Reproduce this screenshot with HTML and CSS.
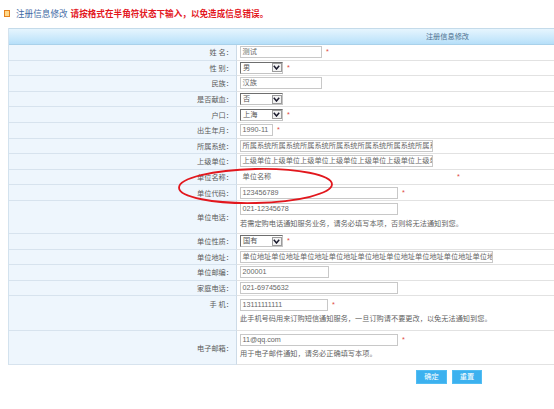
FILE: index.html
```html
<!DOCTYPE html>
<html lang="zh-CN">
<head>
<meta charset="utf-8">
<title>注册信息修改</title>
<link rel="stylesheet" href="styles.css">
</head>
<body>
<div class="page">
  <div class="title">
    <span class="ico"></span>
    <span class="t-blue">注册信息修改</span>
    <span class="t-red">请按格式在半角符状态下输入，以免造成信息错误。</span>
  </div>

  <div class="form">
    <div class="head">注册信息修改</div>

    <div class="row"><div class="lab">姓 名：</div><div class="val"><span class="inp w82">测试</span><span class="req">*</span></div></div>
    <div class="row"><div class="lab">性 别：</div><div class="val"><span class="sel"><span class="sel-t">男</span><span class="arrow"><svg width="7" height="5" viewBox="0 0 7 5"><path d="M0.8 0.8 L3.5 4 L6.2 0.8" fill="none" stroke="#1b1b2e" stroke-width="1.5"/></svg></span></span><span class="req">*</span></div></div>
    <div class="row"><div class="lab">民族：</div><div class="val"><span class="inp w82">汉族</span></div></div>
    <div class="row"><div class="lab">是否献血：</div><div class="val"><span class="sel"><span class="sel-t">否</span><span class="arrow"><svg width="7" height="5" viewBox="0 0 7 5"><path d="M0.8 0.8 L3.5 4 L6.2 0.8" fill="none" stroke="#1b1b2e" stroke-width="1.5"/></svg></span></span></div></div>
    <div class="row"><div class="lab">户口：</div><div class="val"><span class="sel"><span class="sel-t">上海</span><span class="arrow"><svg width="7" height="5" viewBox="0 0 7 5"><path d="M0.8 0.8 L3.5 4 L6.2 0.8" fill="none" stroke="#1b1b2e" stroke-width="1.5"/></svg></span></span><span class="req">*</span></div></div>
    <div class="row"><div class="lab">出生年月：</div><div class="val"><span class="inp w33">1990-11</span><span class="req">*</span></div></div>
    <div class="row"><div class="lab">所属系统：</div><div class="val"><span class="inp w193">所属系统所属系统所属系统所属系统所属系统所属系统所属系统所属系统</span></div></div>
    <div class="row"><div class="lab">上级单位：</div><div class="val"><span class="inp w193">上级单位上级单位上级单位上级单位上级单位上级单位上级单位上级单位</span></div></div>
    <div class="row"><div class="lab">单位名称：</div><div class="val"><span class="inp w213 plain">单位名称</span><span class="req">*</span></div></div>
    <div class="row"><div class="lab">单位代码：</div><div class="val"><span class="inp w158">123456789</span><span class="req">*</span></div></div>

    <div class="row tall r-tel"><div class="lab">单位电话：</div><div class="val col"><span class="inp w158">021-12345678</span><span class="note">若需定购电话通知服务业务，请务必填写本项，否则将无法通知到您。</span></div></div>

    <div class="row"><div class="lab">单位性质：</div><div class="val"><span class="sel"><span class="sel-t">国有</span><span class="arrow"><svg width="7" height="5" viewBox="0 0 7 5"><path d="M0.8 0.8 L3.5 4 L6.2 0.8" fill="none" stroke="#1b1b2e" stroke-width="1.5"/></svg></span></span><span class="req">*</span></div></div>
    <div class="row"><div class="lab">单位地址：</div><div class="val"><span class="inp w253">单位地址单位地址单位地址单位地址单位地址单位地址单位地址单位地址单位地址单位地址</span></div></div>
    <div class="row"><div class="lab">单位邮编：</div><div class="val"><span class="inp w89">200001</span></div></div>
    <div class="row"><div class="lab">家庭电话：</div><div class="val"><span class="inp w158">021-69745632</span></div></div>

    <div class="row tall r-mob"><div class="lab top">手 机：</div><div class="val col"><span class="line"><span class="inp w88">13111111111</span><span class="req">*</span></span><span class="note">此手机号码用来订购短信通知服务，一旦订购请不要更改，以免无法通知到您。</span></div></div>
    <div class="row tall r-mail"><div class="lab">电子邮箱：</div><div class="val col"><span class="line"><span class="inp w158">11@qq.com</span><span class="req">*</span></span><span class="note">用于电子邮件通知，请务必正确填写本项。</span></div></div>
  </div>

  <div class="btns">
    <span class="btn">确定</span>
    <span class="btn">重置</span>
  </div>

  <svg class="mark" width="554" height="409" viewBox="0 0 554 409">
    <ellipse cx="255.5" cy="186" rx="76.5" ry="17" transform="rotate(-1.3 255.5 186)" fill="none" stroke="#e2171d" stroke-width="1.8"/>
  </svg>
</div>
</body>
</html>
```

FILE: styles.css
```css
* {
  box-sizing: border-box;
}

html,
body {
  margin: 0;
  padding: 0;
  background: #ffffff;
}

body {
  width: 554px;
  height: 409px;
  overflow: hidden;
  font-family: "Liberation Sans", "Noto Sans CJK SC", sans-serif;
  font-size: 7.2px;
  color: #555555;
}

.page {
  position: relative;
  width: 554px;
  height: 409px;
}

/* title line */
.title {
  height: 28px;
  display: flex;
  align-items: center;
  padding-left: 4px;
  padding-bottom: 1.5px;
  font-size: 8.6px;
  white-space: nowrap;
}

.ico {
  width: 6px;
  height: 7.5px;
  border: 1.2px solid #e5811c;
  background: #ffd88a;
  margin-right: 6px;
  flex: none;
}

.t-blue {
  color: #3f6aa4;
}

.t-red {
  color: #e3161d;
  font-weight: bold;
  margin-left: 3px;
}

/* form table */
.form {
  margin-left: 8px;
  width: 546px;
  border-left: 1px solid #d3e2ee;
}

.head {
  height: 17px;
  border-top: 1px solid #c4dbea;
  border-bottom: 1px solid #a9d1ea;
  background: linear-gradient(#e6f5fe, #c6e7fb 70%, #b6dff9);
  color: #4d6f8e;
  text-align: center;
  padding-left: 332px;
  line-height: 15px;
}

.row {
  display: grid;
  grid-template-columns: 228px 1fr;
  height: 15.6px;
}

.lab {
  background: #eef6fd;
  border-right: 1px solid #cddbe7;
  border-bottom: 1px solid #d7e3ee;
  display: flex;
  align-items: center;
  justify-content: flex-end;
  padding-right: 3px;
  white-space: nowrap;
  color: #5a5a5a;
}

.lab.top {
  align-items: flex-start;
  padding-top: 2.6px;
  line-height: 12px;
}

.val {
  border-bottom: 1px solid #e2e2e2;
  display: flex;
  align-items: center;
  padding-left: 3px;
  white-space: nowrap;
}

.val.col {
  flex-direction: column;
  align-items: flex-start;
  justify-content: flex-start;
}

.line {
  display: flex;
  align-items: center;
}

.r-tel {
  height: 33px;
}

.r-tel .val {
  padding-top: 2.5px;
}

.r-tel .note {
  margin-top: 2.5px;
}

.r-mob {
  height: 35.1px;
}

.r-mob .val {
  padding-top: 3px;
}

.r-mob .note {
  margin-top: 2px;
}

.r-mail {
  height: 33.5px;
}

.r-mail .val {
  padding-top: 2.5px;
}

.r-mail .note {
  margin-top: 2.5px;
}

.note {
  line-height: 12px;
  color: #5f5f5f;
}

/* fake inputs */
.inp {
  display: block;
  height: 12px;
  border: 1px solid #c8c8c8;
  background: #ffffff;
  padding: 0 1.5px;
  line-height: 10px;
  color: #666666;
  white-space: nowrap;
  overflow: hidden;
  flex: none;
}

.inp.plain {
  border-color: transparent;
}

.w33 { width: 33px; }
.w82 { width: 82px; }
.w88 { width: 88px; }
.w89 { width: 89px; }
.w158 { width: 158px; }
.w193 { width: 193px; }
.w213 { width: 213px; }
.w253 { width: 253px; }

/* fake select */
.sel {
  width: 43px;
  height: 12px;
  border: 1px solid;
  border-color: #6e6e6e #c4c4c4 #c4c4c4 #6e6e6e;
  background: #ffffff;
  display: flex;
  align-items: center;
  justify-content: space-between;
  padding-left: 2px;
  padding-right: 0.5px;
  color: #555555;
  line-height: 10px;
  flex: none;
}

.arrow {
  width: 10px;
  height: 9px;
  border: 1px solid #9c9c9c;
  background: #f3f3f3;
  display: flex;
  align-items: center;
  justify-content: center;
}

.arrow svg {
  display: block;
}

.req {
  color: #e0473f;
  margin-left: 4px;
  line-height: 10px;
}

/* buttons */
.btns {
  display: flex;
  gap: 5px;
  padding-left: 416px;
  margin-top: 5px;
}

.btn {
  width: 31px;
  height: 14px;
  background: #3cb1ef;
  border: 1px solid #52bdf3;
  color: #ffffff;
  text-align: center;
  line-height: 12px;
}

.btn + .btn {
  width: 30px;
}

/* red hand-drawn ellipse over the form */
.mark {
  position: absolute;
  left: 0;
  top: 0;
  pointer-events: none;
}
```
